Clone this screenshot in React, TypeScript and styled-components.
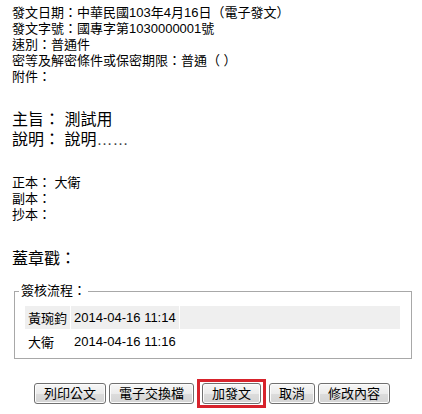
import React from 'react';
import styled, { createGlobalStyle } from 'styled-components';

const GlobalStyle = createGlobalStyle`
    body {
        margin: 0;
        background: #fff;
        color: #000;
        font-family: "Liberation Sans", "Noto Sans CJK TC", sans-serif;
    }
`;

const Page = styled.div`
    width: 422px;
    box-sizing: border-box;
    padding: 5px 10px 0 12px;
`;

const InfoBlock = styled.div<{ $gap?: number }>`
    margin-top: ${(p) => p.$gap ?? 0}px;
    font-size: 13px;
    line-height: 16px;
`;

const BigBlock = styled.div<{ $gap?: number }>`
    margin-top: ${(p) => p.$gap ?? 0}px;
    font-size: 16px;
    line-height: 20px;
`;

const Line = styled.div`
    white-space: nowrap;
`;

const Dots = styled.span`
    color: #444;
`;

const Fieldset = styled.fieldset`
    margin: 14px 0 0 2px;
    width: 398px;
    box-sizing: border-box;
    border: 1px solid #a8a8a8;
    padding: 6px 10px 4px 9px;
    min-inline-size: 0;
`;

const Legend = styled.legend`
    font-size: 13px;
    line-height: 16px;
    padding: 0 2px;
    margin-left: -5px;
`;

const FlowTable = styled.table`
    width: 100%;
    border-collapse: separate;
    border-spacing: 1px;
    font-size: 13px;
`;

const FlowRow = styled.tr<{ $shaded?: boolean }>`
    height: 23px;
    background: ${(p) => (p.$shaded ? '#efefef' : 'transparent')};
`;

const Cell = styled.td<{ $w?: number }>`
    padding: 0 3px;
    white-space: nowrap;
    width: ${(p) => (p.$w ? `${p.$w - 6}px` : 'auto')};
`;

const ButtonRow = styled.div`
    margin-top: 20px;
    display: flex;
    justify-content: center;
    align-items: center;
    gap: 3px;
`;

const Button = styled.button`
    height: 21px;
    padding: 0 9px;
    font-family: inherit;
    font-size: 13px;
    line-height: 19px;
    color: #000;
    border: 1px solid #707070;
    border-radius: 3px;
    background: linear-gradient(#f7f7f7, #ebebeb 50%, #dcdcdc 51%, #d4d4d4);
    box-shadow: inset 0 0 0 1px #fcfcfc;
    cursor: pointer;
`;

const Highlight = styled.span`
    display: inline-flex;
    border: 3px solid #d7232c;
    padding: 1px 2px;
`;

const flow = [
    { name: '黃琬鈞', time: '2014-04-16 11:14' },
    { name: '大衛', time: '2014-04-16 11:16' },
];

function App() {
    return (
        <Page>
            <GlobalStyle />
            <InfoBlock>
                <Line>發文日期：中華民國103年4月16日（電子發文）</Line>
                <Line>發文字號：國專字第1030000001號</Line>
                <Line>速別：普通件</Line>
                <Line>密等及解密條件或保密期限：普通（ ）</Line>
                <Line>附件：</Line>
            </InfoBlock>

            <BigBlock $gap={25}>
                <Line>主旨： 測試用</Line>
                <Line>
                    說明： 說明<Dots>……</Dots>
                </Line>
            </BigBlock>

            <InfoBlock $gap={25}>
                <Line>正本： 大衛</Line>
                <Line>副本：</Line>
                <Line>抄本：</Line>
            </InfoBlock>

            <BigBlock $gap={26}>
                <Line>蓋章戳：</Line>
            </BigBlock>

            <Fieldset>
                <Legend>簽核流程：</Legend>
                <FlowTable>
                    <tbody>
                        {flow.map((f, i) => (
                            <FlowRow key={f.time} $shaded={i % 2 === 0}>
                                <Cell $w={44}>{f.name}</Cell>
                                <Cell $w={105}>{f.time}</Cell>
                                <Cell />
                            </FlowRow>
                        ))}
                    </tbody>
                </FlowTable>
            </Fieldset>

            <ButtonRow>
                <Button>列印公文</Button>
                <Button>電子交換檔</Button>
                <Highlight>
                    <Button>加發文</Button>
                </Highlight>
                <Button>取消</Button>
                <Button>修改內容</Button>
            </ButtonRow>
        </Page>
    );
}

export default App;
